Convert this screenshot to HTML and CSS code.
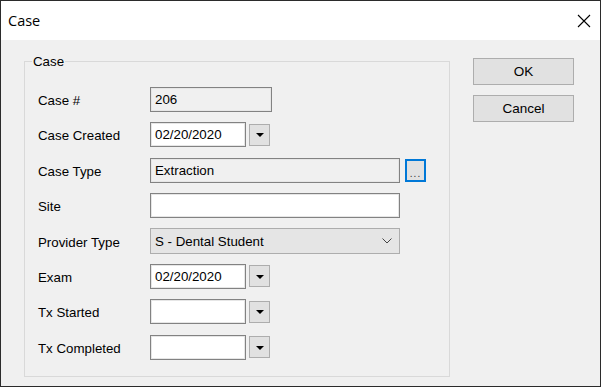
FILE: index.html
```html
<!DOCTYPE html>
<html lang="en">
<head>
  <meta charset="UTF-8">
  <title>Case</title>
  <link rel="stylesheet" href="styles.css">
</head>
<body>
  <div class="window">
    <div class="titlebar">
      <span class="title">Case</span>
      <span class="close">
        <svg width="14" height="14" viewBox="0 0 14 14"><path d="M1 1L13 13M13 1L1 13" stroke="#000" stroke-width="1.1" fill="none"/></svg>
      </span>
    </div>
    <div class="content">
      <fieldset class="group">
        <legend>Case</legend>
        <div class="fields">
          <label>Case #</label>
          <div class="ctl"><div class="box readonly w-num">206</div></div>

          <label>Case Created</label>
          <div class="ctl"><div class="box w-date">02/20/2020</div><span class="drop"><i></i></span></div>

          <label>Case Type</label>
          <div class="ctl"><div class="box readonly w-wide">Extraction</div><span class="ellipsis">...</span></div>

          <label>Site</label>
          <div class="ctl"><div class="box w-wide"></div></div>

          <label>Provider Type</label>
          <div class="ctl">
            <div class="combo w-wide">S - Dental Student
              <svg width="10" height="6" viewBox="0 0 10 6"><path d="M0.5 0.5L5 5L9.5 0.5" stroke="#444" stroke-width="1" fill="none"/></svg>
            </div>
          </div>

          <label>Exam</label>
          <div class="ctl"><div class="box w-date">02/20/2020</div><span class="drop"><i></i></span></div>

          <label>Tx Started</label>
          <div class="ctl"><div class="box w-date"></div><span class="drop"><i></i></span></div>

          <label>Tx Completed</label>
          <div class="ctl"><div class="box w-date"></div><span class="drop"><i></i></span></div>
        </div>
      </fieldset>
      <div class="actions">
        <button>OK</button>
        <button>Cancel</button>
      </div>
    </div>
  </div>
</body>
</html>
```

FILE: styles.css
```css
html,body{margin:0;padding:0;background:#fff}
body{font-family:"Liberation Sans",Arial,sans-serif;font-size:13.3px;color:#000}
.window{width:601px;height:387px;box-sizing:border-box;border:1px solid #2b2b2b;background:#f0f0f0;display:flex;flex-direction:column}
.titlebar{height:39px;background:#fff;display:flex;align-items:center;justify-content:space-between;padding-left:7px}
.title{font-family:"Open Sans","Noto Sans",sans-serif;font-size:14.5px;line-height:1;margin-top:1px}
.close{display:flex;margin-right:9px;margin-top:1px}
.content{flex:1;display:flex;align-items:flex-start;padding:14px 0 0 23px}
.group{margin:0;padding:18px 0 0 13px;width:426px;height:323px;box-sizing:border-box;border:1px solid #d9d9d9}
.group legend{margin-left:-6px;padding:0 1px;line-height:15px}
.fields{display:grid;grid-template-columns:112px auto;grid-auto-rows:25px;row-gap:10.4px;align-items:center}
.fields label{padding-top:2px}
.ctl{display:flex;align-items:center;height:25px}
.box{height:25px;box-sizing:border-box;border:1px solid #828282;box-shadow:inset 0 0 0 1px #e6e6e6;background:#fff;padding:0 4px;display:flex;align-items:center}
.box.readonly{background:#f0f0f0}
.w-num{width:122px}
.w-date{width:96px}
.w-wide{width:250px}
.drop{width:21px;height:22px;margin-left:3px;box-sizing:border-box;border:1px solid #adadad;background:#e1e1e1;display:flex;align-items:center;justify-content:center}
.drop i{width:0;height:0;border-left:4px solid transparent;border-right:4px solid transparent;border-top:4px solid #000;margin-top:1px}
.ellipsis{width:21px;height:23px;margin-left:5px;box-sizing:border-box;border:2px solid #0078d7;background:#e1e1e1;display:flex;align-items:flex-end;justify-content:center;font-size:10px;line-height:12px;color:#333;letter-spacing:1px}
.combo{height:26px;box-sizing:border-box;border:1px solid #adadad;background:#e5e5e5;padding:0 7px 0 4px;display:flex;align-items:center;justify-content:space-between}
.actions{display:flex;flex-direction:column;gap:10px;margin:4px 0 0 23px}
.actions button{width:101px;height:27px;font:inherit;font-size:13.5px;color:#000;background:#e1e1e1;border:1px solid #adadad;border-radius:0;padding:0}
```
